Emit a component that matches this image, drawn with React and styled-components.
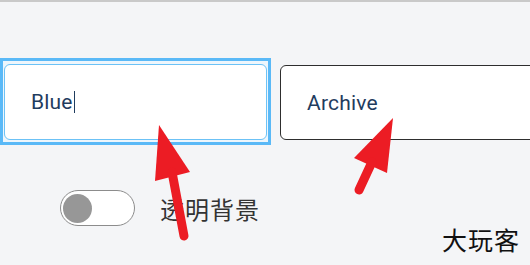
import React from "react";
import styled, { createGlobalStyle } from "styled-components";

const Global = createGlobalStyle`
  html, body {
    margin: 0;
    padding: 0;
    background: #f4f5f7;
  }
`;

const Page = styled.div`
  position: relative;
  width: 530px;
  height: 265px;
  overflow: hidden;
  background: #f4f5f7;
  border-top: 2px solid #c9c9c9;
  box-sizing: border-box;
  font-family: Roboto, "Noto Sans CJK SC", sans-serif;
`;

const InputRow = styled.div`
  display: flex;
  align-items: flex-start;
  gap: 9px;
  margin-top: 56px;
`;

const FocusRing = styled.div`
  flex: none;
  border: 3px solid #5ab9f7;
  padding: 3px 1px 2px 1px;
  background: #eef6fc;
`;

const Field = styled.div`
  flex: none;
  box-sizing: border-box;
  width: ${(p) => p.$width}px;
  height: ${(p) => (p.$focused ? 76 : 75)}px;
  margin-top: ${(p) => (p.$focused ? 0 : 7)}px;
  display: flex;
  align-items: center;
  padding-left: 26px;
  background: #fff;
  border-radius: 6px;
  border: ${(p) => (p.$focused ? "1.5px solid #6cc2f6" : "1.5px solid #2e2e2e")};
  color: #1f3c5e;
  font-size: 21px;
  letter-spacing: 0.2px;
`;

const Caret = styled.span`
  display: inline-block;
  width: 1.5px;
  height: 22px;
  margin-left: 1px;
  background: #1f3c5e;
`;

const ToggleRow = styled.div`
  display: flex;
  align-items: center;
  gap: 25px;
  margin-top: 45px;
  padding-left: 60px;
`;

const Switch = styled.div`
  box-sizing: border-box;
  width: 75px;
  height: 36px;
  border-radius: 18px;
  border: 1.5px solid #8c8c8c;
  background: #fff;
  display: flex;
  align-items: center;
  padding-left: 2px;
`;

const Knob = styled.div`
  width: 29px;
  height: 29px;
  border-radius: 50%;
  background: #979797;
`;

const Label = styled.span`
  font-family: "Noto Sans CJK SC", sans-serif;
  font-size: 24px;
  color: #333;
  letter-spacing: 1px;
`;

const Watermark = styled.div`
  position: absolute;
  right: 10px;
  bottom: 8px;
  font-family: "Noto Sans CJK SC", sans-serif;
  font-size: 25px;
  color: #111;
  letter-spacing: 1px;
`;

const Arrows = styled.svg`
  position: absolute;
  left: 0;
  top: -2px;
  pointer-events: none;
`;

const RED = "#ec1c24";

export default function App() {
  return (
    <>
      <Global />
      <Page>
        <InputRow>
          <FocusRing>
            <Field $focused $width={263}>
              Blue
              <Caret />
            </Field>
          </FocusRing>
          <Field $width={270}>Archive</Field>
        </InputRow>
        <ToggleRow>
          <Switch>
            <Knob />
          </Switch>
          <Label>透明背景</Label>
        </ToggleRow>
        <Watermark>大玩客</Watermark>
        <Arrows width="530" height="265" viewBox="0 0 530 265">
          <polygon points="159,125 155,181 190,172" fill={RED} />
          <line x1="172" y1="172" x2="184" y2="236" stroke={RED} strokeWidth="9" strokeLinecap="round" />
          <polygon points="393,118 354,158 387,173" fill={RED} />
          <line x1="372" y1="162" x2="359" y2="190" stroke={RED} strokeWidth="9" strokeLinecap="round" />
        </Arrows>
      </Page>
    </>
  );
}
